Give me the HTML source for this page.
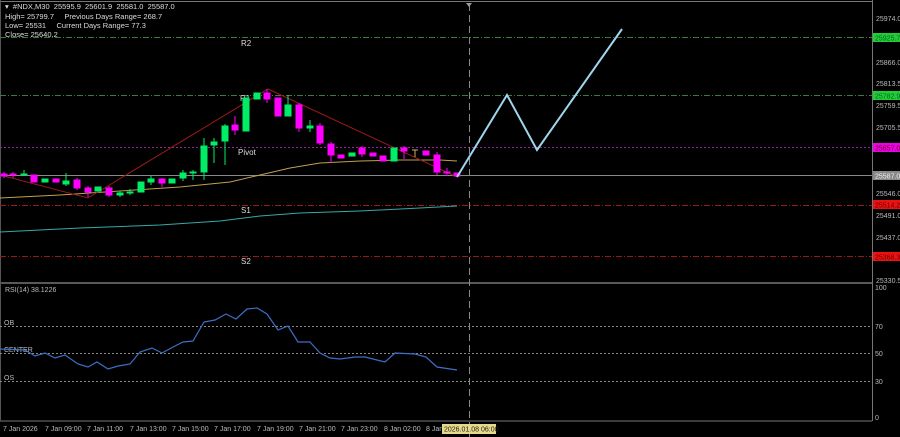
<!DOCTYPE html>
<html><head><meta charset="utf-8"><style>
html,body{margin:0;padding:0;background:#000;}
svg{display:block;font-family:"Liberation Sans",sans-serif;}
text{white-space:pre;}
</style></head><body>
<svg width="900" height="437" viewBox="0 0 900 437" xmlns="http://www.w3.org/2000/svg" xml:space="preserve">
<rect width="900" height="437" fill="#000"/>
<line x1="0" y1="1.5" x2="872" y2="1.5" stroke="#777" stroke-width="1"/>
<line x1="872.5" y1="0" x2="872.5" y2="421" stroke="#777" stroke-width="1"/>
<line x1="0" y1="283" x2="872" y2="283" stroke="#777" stroke-width="1.5"/>
<line x1="0" y1="421" x2="872" y2="421" stroke="#777" stroke-width="1"/>
<line x1="0.5" y1="0" x2="0.5" y2="421" stroke="#555"/>
<g stroke-width="1" fill="none">
<line x1="0" y1="37.5" x2="872" y2="37.5" stroke="#3d7a3d" stroke-dasharray="6,2,1,2"/>
<line x1="0" y1="95.5" x2="872" y2="95.5" stroke="#3d7a3d" stroke-dasharray="6,2,1,2"/>
<line x1="0" y1="147.5" x2="872" y2="147.5" stroke="#a020a0" stroke-dasharray="2,2"/>
<line x1="0" y1="175.5" x2="872" y2="175.5" stroke="#888"/>
<line x1="0" y1="205.5" x2="872" y2="205.5" stroke="#9a1a1a" stroke-dasharray="6,2,1,2"/>
<line x1="0" y1="256.5" x2="872" y2="256.5" stroke="#9a1a1a" stroke-dasharray="6,2,1,2"/>
<line x1="469.5" y1="4" x2="469.5" y2="437" stroke="#888" stroke-dasharray="7,4"/>
</g>
<polygon points="466,3 472,3 469,7" fill="#999"/>
<g fill="#ddd" font-size="8">
<text x="241" y="46">R2</text>
<text x="240" y="101">R1</text>
<text x="238" y="155">Pivot</text>
<text x="241" y="213">S1</text>
<text x="241" y="264">S2</text>
</g>
<polyline fill="none" stroke="#bfa050" stroke-width="1" points="0,198 60,195 120,191 180,187 230,182 260,175 290,168 320,163 360,161 400,160 440,160 457,161"/>
<polyline fill="none" stroke="#3aa7a7" stroke-width="1" points="0,232 80,228 160,225 220,221 260,216 300,213 360,211 420,208 457,206"/>
<polyline fill="none" stroke="#9a1a1a" stroke-width="1" points="0,175 88,198 268,89 457,177"/>
<g stroke-width="1">
<g stroke="#ff00ff" fill="#ff00ff">
<line x1="4" y1="172" x2="4" y2="178"/><rect x="1" y="174" width="6" height="2"/>
<line x1="13" y1="172" x2="13" y2="178"/><rect x="10" y="174" width="6" height="1"/>
<rect x="31" y="175" width="6" height="7"/>
<rect x="53" y="179" width="6" height="3"/>
<rect x="74" y="180" width="6" height="8"/><line x1="77" y1="178" x2="77" y2="190"/>
<rect x="85" y="188" width="6" height="4"/><line x1="88" y1="186" x2="88" y2="197"/>
<rect x="106" y="188" width="6" height="7"/><line x1="109" y1="186" x2="109" y2="197"/>
<rect x="159" y="179" width="6" height="4"/><line x1="162" y1="178" x2="162" y2="187"/>
<rect x="232" y="125" width="6" height="5"/><line x1="235" y1="116" x2="235" y2="135"/>
<rect x="264" y="93" width="6" height="6"/><line x1="267" y1="89" x2="267" y2="103"/>
<rect x="275" y="98" width="6" height="18"/>
<rect x="296" y="105" width="6" height="23"/><line x1="299" y1="103" x2="299" y2="132"/>
<rect x="317" y="126" width="6" height="17"/><line x1="320" y1="123" x2="320" y2="145"/>
<rect x="328" y="144" width="6" height="11"/><line x1="331" y1="142" x2="331" y2="163"/>
<rect x="338" y="155" width="6" height="3"/>
<rect x="359" y="148" width="6" height="6"/><line x1="362" y1="146" x2="362" y2="157"/>
<rect x="370" y="153" width="6" height="3"/>
<rect x="380" y="156" width="6" height="5"/>
<rect x="401" y="148" width="6" height="3"/><line x1="404" y1="146" x2="404" y2="159"/>
<rect x="423" y="151" width="6" height="4"/>
<rect x="434" y="155" width="6" height="17"/><line x1="437" y1="152" x2="437" y2="175"/>
<rect x="444" y="172" width="6" height="1"/><line x1="447" y1="168" x2="447" y2="176"/>
<rect x="454" y="173" width="6" height="3"/>
</g>
<g stroke="#00ee66" fill="#00ee66">
<line x1="24" y1="170" x2="24" y2="176"/><rect x="21" y="174" width="6" height="1"/>
<rect x="42" y="179" width="6" height="3"/>
<rect x="63" y="181" width="6" height="3"/><line x1="66" y1="173" x2="66" y2="186"/>
<rect x="95" y="187" width="6" height="4"/>
<rect x="117" y="193" width="6" height="2"/><line x1="120" y1="191" x2="120" y2="197"/>
<rect x="127" y="192" width="6" height="1"/><line x1="130" y1="189" x2="130" y2="195"/>
<rect x="138" y="182" width="6" height="10"/>
<rect x="148" y="179" width="6" height="3"/><line x1="151" y1="176" x2="151" y2="185"/>
<rect x="169" y="179" width="6" height="4"/>
<rect x="180" y="173" width="6" height="5"/><line x1="183" y1="170" x2="183" y2="181"/>
<rect x="190" y="172" width="6" height="1"/><line x1="193" y1="170" x2="193" y2="180"/>
<rect x="201" y="146" width="6" height="26"/><line x1="204" y1="138" x2="204" y2="180"/>
<rect x="211" y="142" width="6" height="3"/><line x1="214" y1="138" x2="214" y2="163"/>
<rect x="222" y="126" width="6" height="15"/><line x1="225" y1="124" x2="225" y2="165"/>
<rect x="243" y="98" width="6" height="33"/>
<rect x="254" y="93" width="6" height="6"/>
<rect x="285" y="105" width="6" height="11"/><line x1="288" y1="95" x2="288" y2="116"/>
<rect x="307" y="126" width="6" height="2"/><line x1="310" y1="120" x2="310" y2="132"/>
<rect x="349" y="153" width="6" height="3"/>
<rect x="391" y="148" width="6" height="13"/>
</g>
<g stroke="#c8b060"><line x1="412" y1="150" x2="418" y2="150"/><line x1="415" y1="150" x2="415" y2="157"/></g>
</g>
<polyline fill="none" stroke="#9fd6ee" stroke-width="2" points="457,177 507,95 537,150 622,29"/>
<g fill="#bbb" font-size="7">
<text x="876" y="21">25974.0</text>
<text x="876" y="65">25866.0</text>
<text x="876" y="86">25813.5</text>
<text x="876" y="108">25759.5</text>
<text x="876" y="130">25705.5</text>
<text x="876" y="196">25546.0</text>
<text x="876" y="218">25491.0</text>
<text x="876" y="240">25437.0</text>
<text x="876" y="283">25330.5</text>
</g>
<rect x="873" y="33" width="27" height="9" fill="#22cc33"/><text x="875" y="40.5" font-size="7" fill="#063">25925.7</text>
<rect x="873" y="91" width="27" height="9" fill="#22cc33"/><text x="875" y="98.5" font-size="7" fill="#063">25782.9</text>
<rect x="873" y="143" width="27" height="9" fill="#ee00ee"/><text x="875" y="150.5" font-size="7" fill="#600">25657.0</text>
<rect x="873" y="171" width="27" height="9" fill="#888"/><text x="875" y="178.5" font-size="7" fill="#eee">25587.0</text>
<rect x="873" y="200" width="27" height="9" fill="#ee1111"/><text x="875" y="207.5" font-size="7" fill="#600">25514.2</text>
<rect x="873" y="252" width="27" height="9" fill="#ee1111"/><text x="875" y="259.5" font-size="7" fill="#600">25368.3</text>
<g fill="#ddd" font-size="7.5">
<text x="5" y="9">▾  #NDX,M30  25595.9  25601.9  25581.0  25587.0</text>
<text x="5" y="19">High= 25799.7     Previous Days Range= 268.7</text>
<text x="5" y="28">Low= 25531     Current Days Range= 77.3</text>
<text x="5" y="37">Close= 25640.2</text>
</g>
<g stroke="#888" stroke-dasharray="2,2" stroke-width="1">
<line x1="0" y1="326.5" x2="872" y2="326.5"/>
<line x1="0" y1="353.5" x2="872" y2="353.5"/>
<line x1="0" y1="381.5" x2="872" y2="381.5"/>
</g>
<g fill="#bbb" font-size="7">
<text x="5" y="292">RSI(14) 38.1226</text>
<text x="4" y="325">OB</text>
<text x="4" y="352">CENTER</text>
<text x="4" y="380">OS</text>
<text x="875" y="290">100</text>
<text x="875" y="329">70</text>
<text x="875" y="356">50</text>
<text x="875" y="384">30</text>
<text x="875" y="420">0</text>
</g>
<polyline fill="none" stroke="#3d6fc4" stroke-width="1.2" points="0,349 25,350 35,356 45,353 55,358 65,355 78,364 88,367 97,362 108,369 118,366 130,364 140,352 152,348 162,353 175,346 183,342 193,341 204,322 215,320 226,314 236,319 247,309 257,308 267,314 278,330 288,326 298,342 310,342 320,353 330,358 340,359 355,357 365,357 385,362 395,353 415,354 426,357 437,367 457,370"/>
<g fill="#bbb" font-size="7">
<text x="3" y="431">7 Jan 2026</text>
<text x="45" y="431">7 Jan 09:00</text>
<text x="87" y="431">7 Jan 11:00</text>
<text x="130" y="431">7 Jan 13:00</text>
<text x="172" y="431">7 Jan 15:00</text>
<text x="214" y="431">7 Jan 17:00</text>
<text x="257" y="431">7 Jan 19:00</text>
<text x="299" y="431">7 Jan 21:00</text>
<text x="341" y="431">7 Jan 23:00</text>
<text x="384" y="431">8 Jan 02:00</text>
<text x="426" y="431">8 Jan</text>
</g>
<rect x="442" y="424" width="54" height="10" fill="#e6d98a"/>
<text x="444" y="431.5" font-size="7" fill="#222">2026.01.08 06:00</text>
</svg>
</body></html>
